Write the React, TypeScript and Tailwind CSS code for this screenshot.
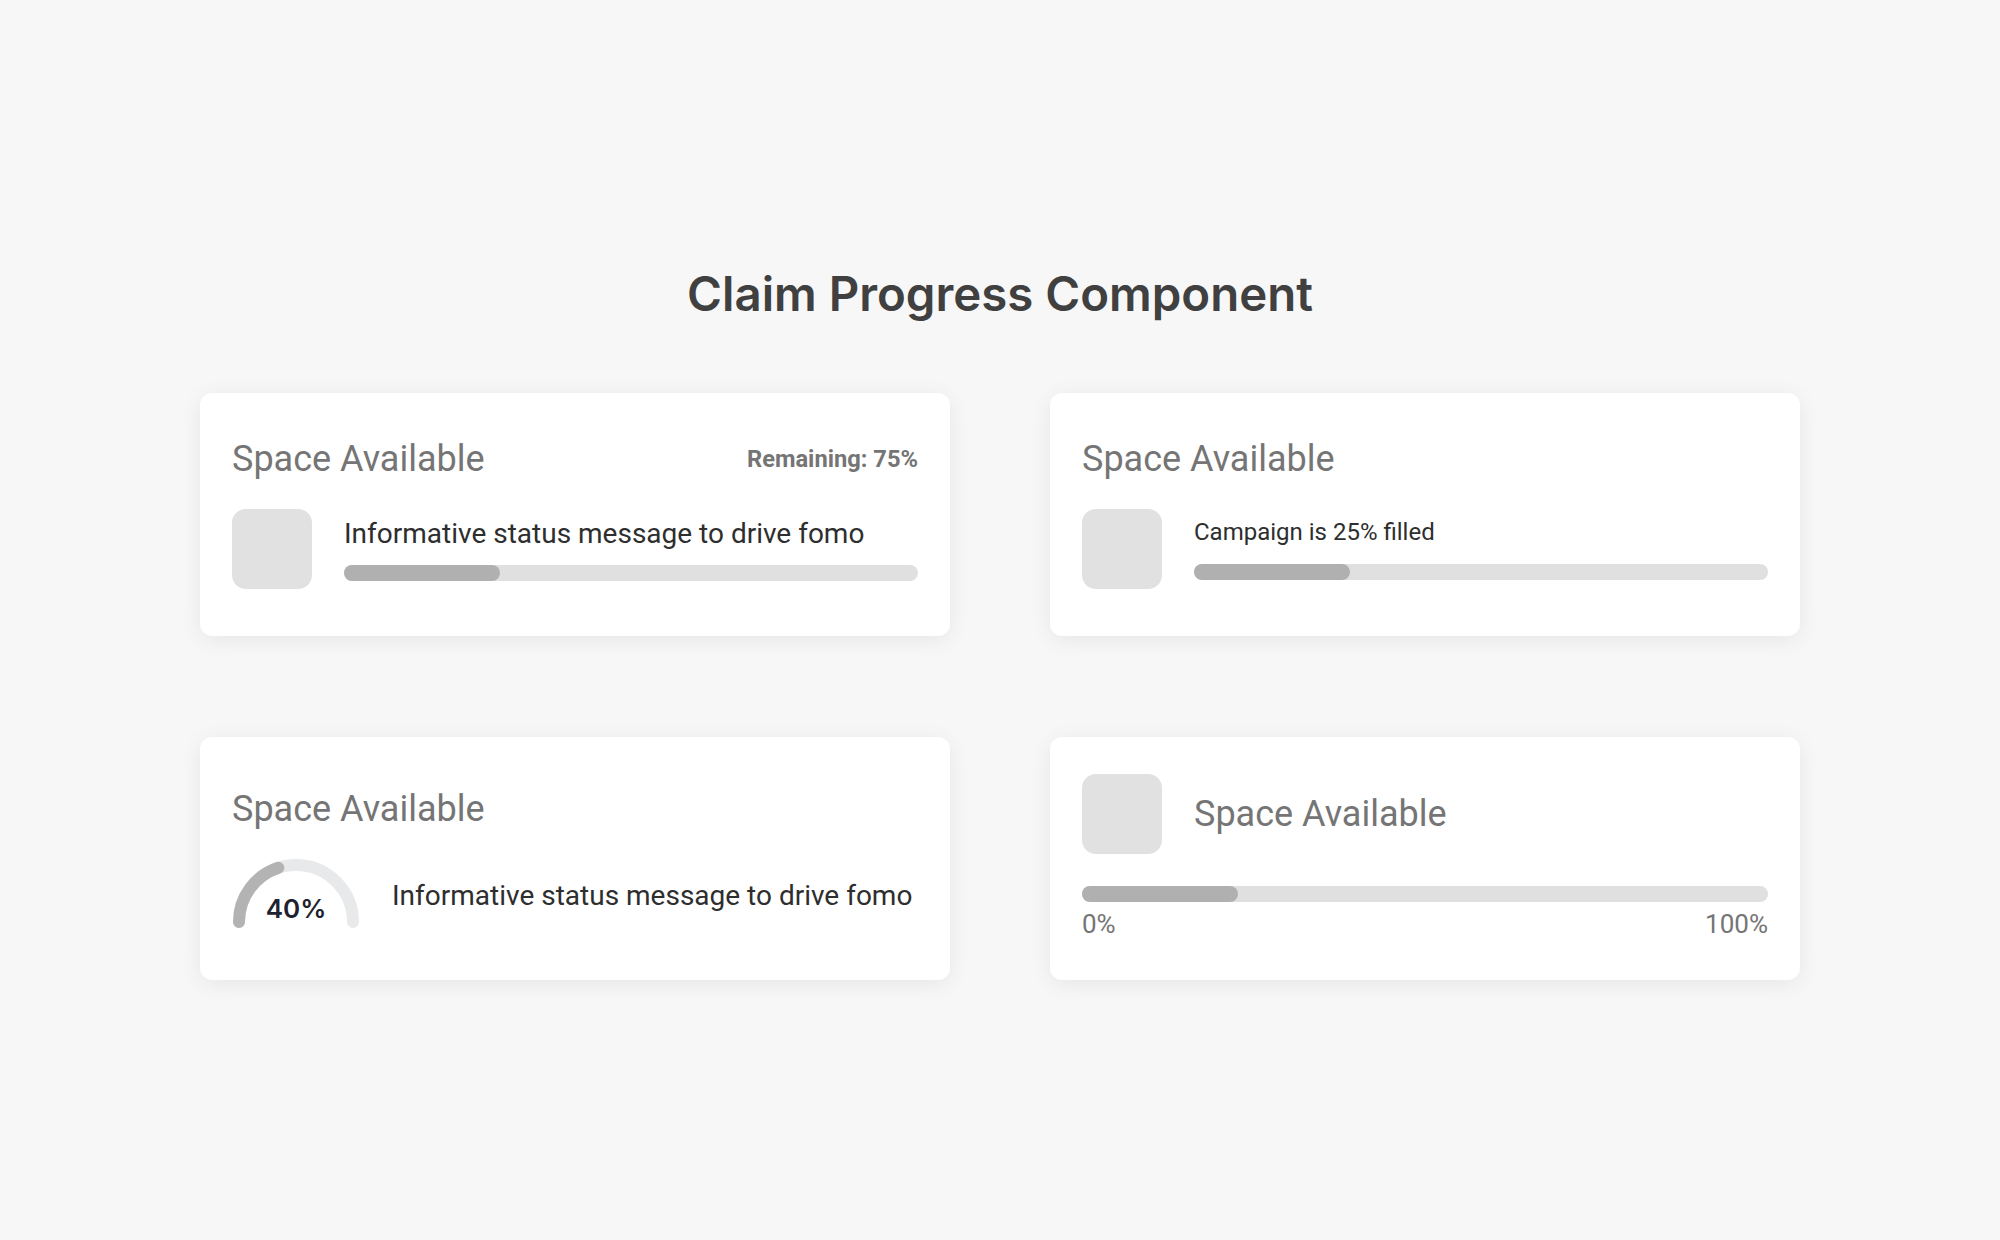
import React from "react";

const roboto = { fontFamily: "Roboto, 'Liberation Sans', sans-serif" };

function Card({ children, className = "" }: { children: React.ReactNode; className?: string }) {
  return (
    <div
      className={`flex h-[243px] flex-col justify-center rounded-xl bg-white px-8 shadow-[0_4px_22px_rgba(0,0,0,0.07)] ${className}`}
      style={roboto}
    >
      {children}
    </div>
  );
}

function Thumb() {
  return <div className="h-20 w-20 shrink-0 rounded-[14px] bg-[#e1e1e1]" />;
}

function Bar({ fill = 156 }: { fill?: number }) {
  return (
    <div className="h-4 w-full rounded-full bg-[#e0e0e0]">
      <div className="h-4 rounded-full bg-[#b0b0b0]" style={{ width: fill }} />
    </div>
  );
}

function Gauge({ value }: { value: number }) {
  const r = 57;
  const a = (value / 100) * Math.PI;
  const x = 64 - r * Math.cos(a);
  const y = 63 - r * Math.sin(a);
  return (
    <div className="relative h-[70px] w-32 shrink-0">
      <svg width="128" height="70" viewBox="0 0 128 70">
        <path d="M 7 63 A 57 57 0 0 1 121 63" fill="none" stroke="#e8e9eb" strokeWidth="12" strokeLinecap="round" />
        <path d={`M 7 63 A 57 57 0 0 1 ${x} ${y}`} fill="none" stroke="#b3b3b3" strokeWidth="12" strokeLinecap="round" />
      </svg>
      <span
        className="absolute left-0 right-0 top-[34px] text-center text-[26px] leading-[32px] font-semibold text-[#1e2230]"
        style={{ fontFamily: "Inter, sans-serif" }}
      >
        {value}%
      </span>
    </div>
  );
}

export default function App() {
  return (
    <div className="min-h-screen bg-[#f7f7f7] pt-[270px]">
      <h1
        className="text-center text-[47.4px] leading-[48px] font-semibold text-[#404040]"
        style={{ fontFamily: "Inter, sans-serif" }}
      >
        Claim Progress Component
      </h1>

      <div className="mx-auto mt-[75px] grid w-[1600px] grid-cols-2 gap-x-[100px] gap-y-[101px]">
        {/* bar with remaining */}
        <Card className="pb-[3px]">
          <div className="flex items-center justify-between">
            <span className="text-[36px] leading-[42px] text-[#757575]">Space Available</span>
            <span className="text-[23.7px] leading-[26px] font-bold text-[#757575]">Remaining: 75%</span>
          </div>
          <div className="mt-[29px] flex items-center gap-8">
            <Thumb />
            <div className="flex flex-1 flex-col gap-[15px]">
              <span className="text-[28px] leading-[33px] text-[#2e2e2e]">Informative status message to drive fomo</span>
              <Bar />
            </div>
          </div>
        </Card>

        {/* bar with campaign text */}
        <Card className="pb-[3px]">
          <span className="text-[36px] leading-[42px] text-[#757575]">Space Available</span>
          <div className="mt-[29px] flex items-center gap-8">
            <Thumb />
            <div className="flex flex-1 flex-col gap-[18px]">
              <span className="text-[24px] leading-[28px] text-[#2e2e2e]">Campaign is 25% filled</span>
              <Bar />
            </div>
          </div>
        </Card>

        {/* gauge */}
        <Card>
          <span className="text-[36px] leading-[42px] text-[#757575]">Space Available</span>
          <div className="mt-[29px] flex items-center gap-8">
            <Gauge value={40} />
            <span className="pt-[3px] text-[28px] leading-[33px] text-[#2e2e2e]">Informative status message to drive fomo</span>
          </div>
        </Card>

        {/* bar with scale */}
        <Card className="pb-[5px]">
          <div className="flex items-center gap-8">
            <Thumb />
            <span className="text-[36px] leading-[42px] text-[#757575]">Space Available</span>
          </div>
          <div className="mt-8">
            <Bar />
          </div>
          <div className="mt-[8px] flex justify-between text-[26px] leading-[28px] text-[#757575]">
            <span>0%</span>
            <span>100%</span>
          </div>
        </Card>
      </div>
    </div>
  );
}
